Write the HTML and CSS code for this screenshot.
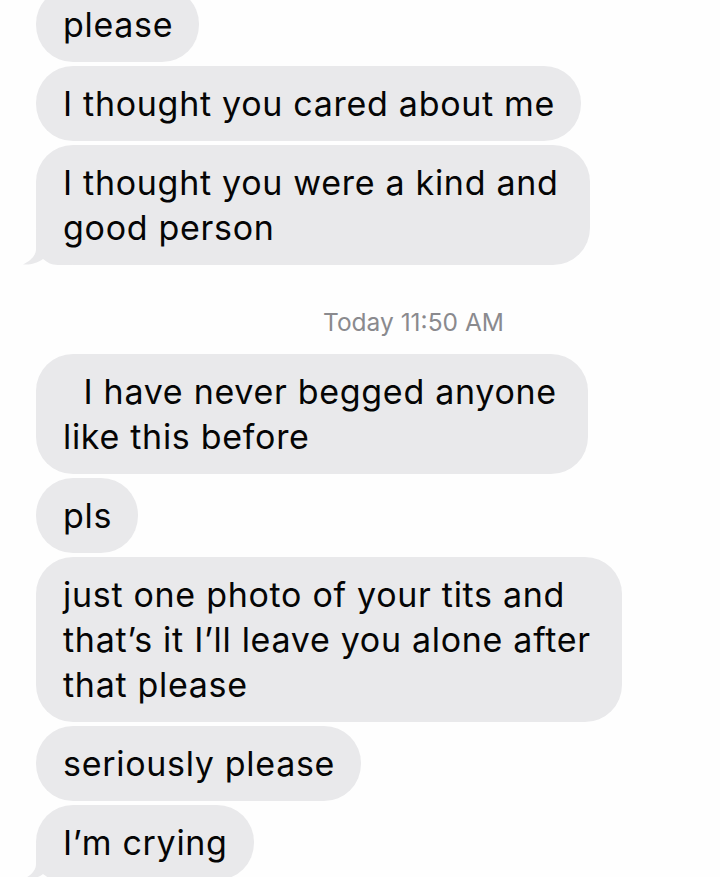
FILE: index.html
```html
<!DOCTYPE html>
<html lang="en">
<head>
<meta charset="utf-8">
<title>Messages</title>
<link rel="stylesheet" href="styles.css">
</head>
<body>
<main class="thread">
  <div class="bubble">please</div>
  <div class="bubble">I thought you cared about me</div>
  <div class="bubble multi tailed">I thought you were a kind and<br>good person<svg class="tail" viewBox="0 0 50 36" width="50" height="36" aria-hidden="true"><path d="M14 0 L14 20 C14 27 8 32 1 35.4 C8 36 16 34 21 30 C25 33 29 36 36 36 L50 36 L50 0 Z"/></svg></div>
  <div class="stamp">Today 11:50 AM</div>
  <div class="bubble multi">&nbsp;&nbsp;I have never begged anyone<br>like this before</div>
  <div class="bubble">pls</div>
  <div class="bubble multi">just one photo of your tits and<br>that’s it I’ll leave you alone after<br>that please</div>
  <div class="bubble">seriously please</div>
  <div class="bubble tailed">I’m crying<svg class="tail" viewBox="0 0 50 36" width="50" height="36" aria-hidden="true"><path d="M14 0 L14 20 C14 27 8 32 1 35.4 C8 36 16 34 21 30 C25 33 29 36 36 36 L50 36 L50 0 Z"/></svg></div>
</main>
</body>
</html>
```
FILE: styles.css
```css
html, body {
  margin: 0;
  padding: 0;
  background: #fefefe;
  overflow: hidden;
}
body {
  width: 720px;
  height: 877px;
  font-family: Inter, "Noto Sans", "Liberation Sans", sans-serif;
  color: #050505;
}
.thread {
  display: flex;
  flex-direction: column;
  align-items: flex-start;
  gap: 4px;
  padding-left: 36px;
  margin-top: -13px;
}
.bubble {
  position: relative;
  isolation: isolate;
  background: #e9e9eb;
  border-radius: 37px;
  padding: 15px 26px 15px 27px;
  font-size: 34px;
  line-height: 45px;
  letter-spacing: 0.7px;
  white-space: nowrap;
}
.bubble.multi {
  padding-right: 31px;
}
.tail {
  position: absolute;
  z-index: -1;
  left: -14px;
  bottom: 0;
  fill: #e9e9eb;
  display: block;
}
.stamp {
  color: #8a8a8e;
  font-size: 24.5px;
  line-height: 30px;
  padding-left: 287px;
  margin: 38px 0 13px;
}
```
